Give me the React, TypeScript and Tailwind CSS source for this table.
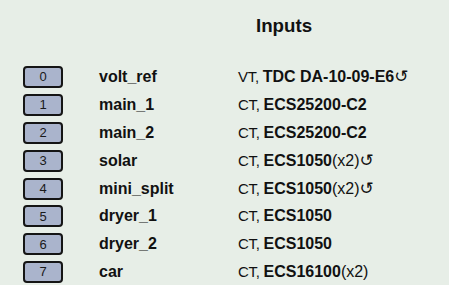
const inputs = [
  { name: "volt_ref", kind: "VT", model: "TDC DA-10-09-E6", extra: "", redo: true },
  { name: "main_1", kind: "CT", model: "ECS25200-C2", extra: "", redo: false },
  { name: "main_2", kind: "CT", model: "ECS25200-C2", extra: "", redo: false },
  { name: "solar", kind: "CT", model: "ECS1050", extra: "(x2)", redo: true },
  { name: "mini_split", kind: "CT", model: "ECS1050", extra: "(x2)", redo: true },
  { name: "dryer_1", kind: "CT", model: "ECS1050", extra: "", redo: false },
  { name: "dryer_2", kind: "CT", model: "ECS1050", extra: "", redo: false },
  { name: "car", kind: "CT", model: "ECS16100", extra: "(x2)", redo: false },
];

export default function App() {
  return (
    <div className="h-[285px] w-[449px] overflow-hidden bg-[#e7eee7] font-['Liberation_Sans',Arial,sans-serif] text-[#111]">
      <div className="pl-[119px] pt-[15px] h-[63px]">
        <h3 className="text-center text-[18.72px] font-bold leading-[21.5px]">Inputs</h3>
      </div>

      <div className="flex flex-col">
        {inputs.map((input, i) => (
          <div key={input.name} className="flex h-[27.9px] items-center">
            <div className="ml-[23px] flex h-[22px] w-[40px] items-center justify-center rounded-[4px] border-2 border-[#151515] bg-[#aab4cc] text-[13px] text-[#1a1a1a]">
              {i}
            </div>
            <div className="ml-[36px] w-[139px] text-[16px] font-bold">{input.name}</div>
            <div className="flex items-baseline whitespace-pre">
              <span className="text-[15px] tracking-[-0.3px]">{input.kind}, </span>
              <span className="text-[16px] font-bold">{input.model}</span>
              {input.extra && <span className="text-[16px]">{input.extra}</span>}
              {input.redo && (
                <span className="font-['DejaVu_Sans',sans-serif] text-[17px] leading-none">↺</span>
              )}
            </div>
          </div>
        ))}
      </div>
    </div>
  );
}
